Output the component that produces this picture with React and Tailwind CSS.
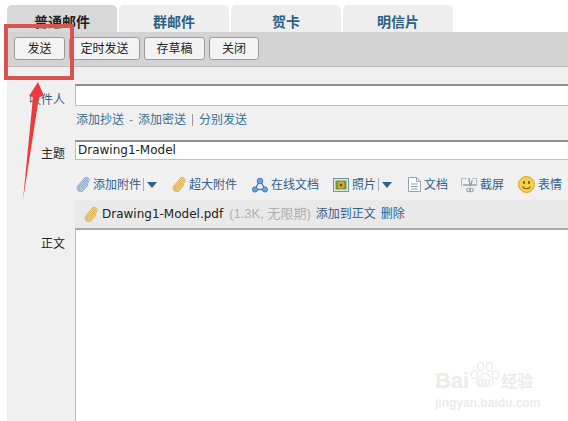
import React from 'react';

const font = "font-['Liberation_Sans','Noto_Sans_CJK_SC',sans-serif]";
const latin = "font-['DejaVu_Sans','Noto_Sans_CJK_SC',sans-serif]";

const tabs = ['普通邮件', '群邮件', '贺卡', '明信片'];
const buttons = [
  { label: '发送', w: 'w-[51px]' },
  { label: '定时发送', w: 'w-[71px]' },
  { label: '存草稿', w: 'w-[61px]' },
  { label: '关闭', w: 'w-[50px]' },
];

const clipPath = 'M9.5 3.500 4 10c-1 1.300.8 2.900 2 1.700l5.800-6.900c1.800-2.200-1.300-4.800-3.200-2.700L2.500 9.300c-2.500 3 1.700 6.400 4.200 3.500L11 8';

const Clip = ({ color = '#7f9fc0', core = '#e4edf5' }) => (
  <svg width="14" height="15" viewBox="0 0 14 15" fill="none" strokeLinecap="round">
    <path d={clipPath} stroke={color} strokeWidth="2.200" />
    <path d={clipPath} stroke={core} strokeWidth="0.800" />
  </svg>
);

const Caret = () => (
  <svg width="10" height="6" viewBox="0 0 10 6"><path d="M0 0h10L5 6z" fill="#33608a" /></svg>
);

const Share = () => (
  <svg width="16" height="16" viewBox="0 0 16 16" fill="none">
    <path d="M8 3 3 12.500h10z" stroke="#3f7fc0" strokeWidth="1.400" />
    <circle cx="8" cy="4" r="2.800" fill="#6fa2d6" stroke="#3f7fc0" />
    <circle cx="3" cy="12.500" r="2.600" fill="#6fa2d6" stroke="#3f7fc0" />
    <circle cx="13" cy="12.500" r="2.600" fill="#6fa2d6" stroke="#3f7fc0" />
  </svg>
);

const Photo = () => (
  <svg width="16" height="14" viewBox="0 0 16 14">
    <rect x=".5" y=".5" width="15" height="13" fill="#dfe9ee" stroke="#6f93a8" />
    <rect x="2.500" y="2.500" width="11" height="9" fill="#6f9a3c" />
    <circle cx="8" cy="7" r="3.400" fill="#e7a81e" />
    <circle cx="8" cy="7" r="1.500" fill="#7a4a16" />
  </svg>
);

const Doc = () => (
  <svg width="13" height="15" viewBox="0 0 13 15" fill="#fff" stroke="#8ea3b4">
    <path d="M.5.5h8l4 4v10H.5z" />
    <path d="M8.500.5v4h4M3 7h7M3 9.500h7M3 12h7" fill="none" />
  </svg>
);

const Scissors = () => (
  <svg width="16" height="16" viewBox="0 0 16 16" fill="none" stroke="#8f9498">
    <path d="M.5 9V1.500h5M15.500 9V1.500h-4M.5 11h1" stroke="#b4b8bb" />
    <path d="M2 8h13" strokeWidth="1.300" />
    <path d="M8 1c0 4 .5 6 2 8M11 3c0 3-1 5-2.500 6" strokeWidth="1.100" />
    <circle cx="7.500" cy="13" r="1.800" />
    <circle cx="10.500" cy="13" r="1.800" />
  </svg>
);

const Smile = () => (
  <svg width="17" height="17" viewBox="0 0 17 17">
    <circle cx="8.500" cy="8.500" r="8" fill="#f5d04e" stroke="#d9a520" />
    <ellipse cx="6" cy="6.500" rx="1" ry="1.700" fill="#7a5510" />
    <ellipse cx="11" cy="6.500" rx="1" ry="1.700" fill="#7a5510" />
    <path d="M4.500 10.500c1.500 3 6.500 3 8 0" fill="none" stroke="#7a5510" strokeWidth="1.100" />
  </svg>
);

const Tool = ({ icon, label, caret, w }) => (
  <div className={`flex items-center shrink-0 text-[#33608a] ${w}`}>
    {icon}
    <span className="ml-[3px]">{label}</span>
    {caret && (
      <>
        <span className="ml-[2px] w-px h-[13px] bg-[#9fb2c4]" />
        <span className="ml-[3px] flex"><Caret /></span>
      </>
    )}
  </div>
);

const Paw = () => (
  <svg width="30" height="31" viewBox="0 0 34 34" fill="none" stroke="#e9e9e9" strokeWidth="1.300">
    <ellipse cx="5" cy="15" rx="3.500" ry="4.500" />
    <ellipse cx="12" cy="6" rx="3.500" ry="5" />
    <ellipse cx="22" cy="6" rx="3.500" ry="5" />
    <ellipse cx="29" cy="15" rx="3.500" ry="4.500" />
    <path d="M17 13c4 0 5 4 8 7 3 4 1 9-4 8-3-.6-5-.6-8 0-5 1-7-4-4-8 3-3 4-7 8-7z" />
  </svg>
);

export default function App() {
  return (
    <div className={`relative w-[568px] h-[421px] overflow-hidden bg-white text-[12px] ${font}`}>
      {/* tabs */}
      <div className="flex gap-[2px] pl-[7px] pt-[5px] h-[32px]">
        {tabs.map((t, i) => (
          <div
            key={t}
            className={`w-[110px] h-[27px] rounded-t-[5px] flex justify-center items-center pt-[7px] text-[14px] font-bold ${
              i === 0 ? 'bg-[#d8d8d8] text-[#222]' : 'bg-[#eeeeee] text-[#2d6288]'
            }`}
          >
            {t}
          </div>
        ))}
      </div>

      <div className="ml-[7px] h-[389px] bg-[#f0f0f0] flex flex-col">
        {/* action bar */}
        <div className="h-[35px] bg-[#d3d3d3] border-b border-[#bdbdbd] flex items-start gap-[4px] pl-[7px] pt-[5px]">
          {buttons.map((b) => (
            <button
              key={b.label}
              className={`${b.w} h-[23px] bg-[#f3f3f3] border border-[#9b9b9b] rounded-[3px] text-[12px] text-[#222] flex items-center justify-center`}
            >
              {b.label}
            </button>
          ))}
        </div>

        {/* recipients */}
        <div className="flex mt-[17px] h-[22px]">
          <div className="w-[58px] text-right text-[#33608a] pt-[7px]">收件人</div>
          <div className="ml-[10px] flex-1 h-[22px] bg-white border-t-2 border-t-[#8e8e8e] border-b border-b-[#bdbdbd] border-l border-l-[#bdbdbd]" />
        </div>
        <div className="flex items-center ml-[69px] mt-[6px] h-[16px] text-[#33708f]">
          <span>添加抄送</span>
          <span className="mx-[5px] text-[#888]">-</span>
          <span>添加密送</span>
          <span className="mx-[6px] w-px h-[12px] bg-[#9a9a9a]" />
          <span>分别发送</span>
        </div>

        {/* subject */}
        <div className="flex mt-[12px]">
          <div className="w-[58px] text-right text-[#222] pt-[5px]">主题</div>
          <div className={`ml-[10px] flex-1 h-[20px] bg-white border-t-2 border-t-[#8e8e8e] border-b border-b-[#bdbdbd] border-l border-l-[#bdbdbd] pl-[2px] text-[12px] leading-[16px] text-[#222] ${latin}`}>
            Drawing1-Model
          </div>
        </div>

        {/* attachment tools */}
        <div className="flex items-center ml-[69px] mt-[13px] h-[17px] overflow-hidden">
          <Tool w="w-[96px]" icon={<Clip />} label="添加附件" caret />
          <Tool w="w-[80px]" icon={<Clip color="#d9a93f" core="#f7e7b8" />} label="超大附件" />
          <Tool w="w-[81px]" icon={<Share />} label="在线文档" />
          <Tool w="w-[75px]" icon={<Photo />} label="照片" caret />
          <Tool w="w-[53px]" icon={<Doc />} label="文档" />
          <Tool w="w-[57px]" icon={<Scissors />} label="截屏" />
          <Tool w="w-[50px]" icon={<Smile />} label="表情" />
        </div>

        {/* attachment row */}
        <div className="ml-[68px] mt-[7px] h-[30px] bg-[#e9e9e9] border-b-2 border-b-[#a8a8a8] flex items-center pl-[9px]">
          <Clip color="#d9a93f" core="#f7e7b8" />
          <span className={`ml-[4px] text-[12px] text-[#222] ${latin}`}>Drawing1-Model.pdf</span>
          <span className="ml-[6px] text-[13px] text-[#b0b0b0]">(1.3K, 无限期)</span>
          <span className="ml-[5px] text-[#33608a]">添加到正文</span>
          <span className="ml-[5px] text-[#33608a]">删除</span>
        </div>

        {/* body */}
        <div className="flex flex-1">
          <div className="w-[58px] text-right text-[#222] pt-[5px]">正文</div>
          <div className="ml-[10px] flex-1 bg-white border-l border-l-[#bdbdbd]" />
        </div>
      </div>

      {/* red highlight box */}
      <div className="absolute left-[4px] top-[24px] w-[70px] h-[56px] border-4 border-[#d9534f]" />

      {/* red arrow */}
      <svg className="absolute left-[18px] top-[80px]" width="34" height="122" viewBox="0 0 34 122">
        <path d="M20 2 26 16 21 17 5 120 15 17 11 16z" fill="#ec3b40" />
      </svg>

      {/* watermark */}
      <div className="absolute left-[435px] top-[359px] w-[110px] pointer-events-none font-bold text-[#ececec]">
        <div className="flex items-end h-[33px]">
          <span className="text-[22px] leading-[22px]">Bai</span>
          <span className="relative ml-[1px] flex">
            <Paw />
            <span className="absolute left-[7px] top-[14px] text-[11px] leading-[12px]">du</span>
          </span>
          <span className="ml-[1px] text-[16px] leading-[20px]">经验</span>
        </div>
        <div className="mt-[4px] text-[12px] leading-[14px]">jingyan.baidu.com</div>
      </div>
    </div>
  );
}
